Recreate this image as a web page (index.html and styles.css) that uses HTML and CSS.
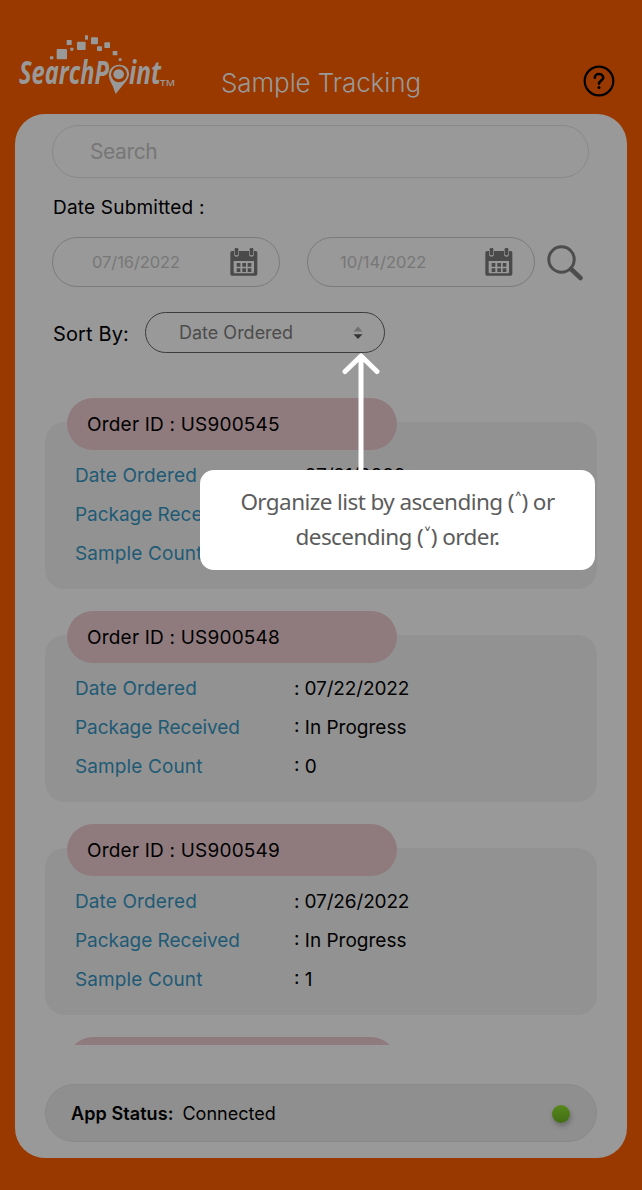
FILE: index.html
```html
<!DOCTYPE html>
<html lang="en">
<head>
<meta charset="utf-8">
<title>Sample Tracking</title>
<link rel="stylesheet" href="styles.css">
</head>
<body>
<svg class="defs" width="0" height="0">
  <symbol id="calendar" viewBox="0 0 84 84">
    <path fill="#4a4a4a" d="M6 9H12V17Q12 26 19.500 26T27 17V9H57V17Q57 26 64.500 26T72 17V9H78Q82 9 82 14V78Q82 83 77 83H6Q1 83 1 78V14Q1 9 6 9ZM11 39V73Q11 76 14 76H69Q72 76 72 73V39Z"/>
    <path fill="#4a4a4a" d="M20 45h11v11H20zM37 45h11v11H37zM53 45h11v11H53zM20 61h11v11H20zM37 61h11v11H37zM53 61h11v11H53z"/>
    <rect x="14" y="0" width="11" height="22" rx="4" fill="#4a4a4a"/>
    <rect x="59" y="0" width="11" height="22" rx="4" fill="#4a4a4a"/>
  </symbol>
</svg>
<div class="app">
  <header class="header">
    <svg class="logo" viewBox="0 20 214 94" width="214" height="94">
      <g fill="#999">
        <g transform="translate(0 20) scale(.33333)">
          <rect x="170" y="87" width="31" height="31" rx="3"/><rect x="150" y="109" width="10" height="9" rx="2"/>
          <rect x="200" y="60" width="15" height="15" rx="2"/><rect x="211" y="83" width="9" height="9" rx="2"/>
          <rect x="231" y="65" width="26" height="25" rx="3"/><rect x="255" y="46" width="9" height="13" rx="2"/>
          <rect x="273" y="52" width="21" height="21" rx="3"/><rect x="291" y="79" width="15" height="14" rx="2"/>
          <rect x="313" y="67" width="17" height="17" rx="2"/><rect x="338" y="93" width="14" height="13" rx="2"/>
          <rect x="356" y="115" width="9" height="8" rx="2"/>
          <path fill-rule="evenodd" d="M357 134C376 134 388 146 387 163C386 178 374 189 364 201Q356 211 347 222Q343 211 339 200C333 187 325 176 327 160C329 145 341 134 357 134ZM357 139A24 24 0 1 0 357 187A24 24 0 1 0 357 139Z"/>
          <ellipse cx="356" cy="163" rx="16" ry="15"/>
        </g>
        <text class="logo-word" x="19" y="83.500" textLength="90" lengthAdjust="spacingAndGlyphs">SearchP</text>
        <text class="logo-word" x="129" y="83.500" textLength="32" lengthAdjust="spacingAndGlyphs">int</text>
        <text class="logo-tm" x="160" y="86" textLength="15" lengthAdjust="spacingAndGlyphs">TM</text>
      </g>
    </svg>
    <h1 class="title">Sample Tracking</h1>
    <svg class="help" width="32" height="32" viewBox="0 0 32 32" fill="none" stroke="#000" stroke-width="2.200">
      <circle cx="16" cy="16" r="14.300"/>
      <path stroke-width="2.600" stroke-linecap="round" d="M11.800 12.700C11.800 7.800 20.200 7.800 20.200 12.700C20.200 15.500 16 15.500 16 18.800"/>
      <circle cx="16" cy="22.600" r="1.500" fill="#000" stroke="none"/>
    </svg>
  </header>
  <main class="panel">
    <div class="search">Search</div>
    <div class="label">Date Submitted :</div>
    <div class="dates">
      <div class="date"><span>07/16/2022</span><svg width="28" height="28"><use href="#calendar"/></svg></div>
      <div class="date date-to"><span>10/14/2022</span><svg width="28" height="28"><use href="#calendar"/></svg></div>
      <svg class="find" width="36" height="36" viewBox="0 0 36 36" fill="none" stroke="#4d4d4d">
        <circle cx="14.500" cy="14.500" r="12.700" stroke-width="3"/>
        <path d="M24 24L33.500 33" stroke-width="4.500" stroke-linecap="round"/>
      </svg>
    </div>
    <div class="sort">
      <span class="sort-label">Sort By:</span>
      <div class="select"><span>Date Ordered</span>
        <svg width="10" height="14" viewBox="0 0 10 14"><path d="M5 .5L9.500 5.500H.5z" fill="#707070"/><path d="M5 13L9.500 8.200H.5z" fill="#333"/></svg>
      </div>
    </div>
    <div class="orders">
      <section class="order">
        <div class="order-id">Order ID : US900545</div>
        <div class="card">
          <span class="key k1">Date Ordered</span><span class="val day">: 07/21/2022</span>
          <span class="key k2">Package Received</span><span class="val"></span>
          <span class="key k3">Sample Count</span><span class="val"></span>
        </div>
      </section>
      <section class="order">
        <div class="order-id">Order ID : US900548</div>
        <div class="card">
          <span class="key k1">Date Ordered</span><span class="val day">: 07/22/2022</span>
          <span class="key k2">Package Received</span><span class="val">: In Progress</span>
          <span class="key k3">Sample Count</span><span class="val">: 0</span>
        </div>
      </section>
      <section class="order">
        <div class="order-id">Order ID : US900549</div>
        <div class="card">
          <span class="key k1">Date Ordered</span><span class="val day">: 07/26/2022</span>
          <span class="key k2">Package Received</span><span class="val">: In Progress</span>
          <span class="key k3">Sample Count</span><span class="val">: 1</span>
        </div>
      </section>
      <section class="order"><div class="order-id"></div></section>
    </div>
    <footer class="status"><b>App Status:</b><span>Connected</span><i class="dot"></i></footer>
  </main>
  <div class="callout">
    <svg class="arrow" width="40" height="118" viewBox="0 0 40 118" fill="none" stroke="#fff" stroke-width="5" stroke-linecap="round" stroke-linejoin="round"><path d="M20 118V4M4 19.500L20 4L36 19.500"/></svg>
    <div class="tip"><div>Organize list by ascending (<span class="caret">˄</span>) or</div><div>descending (<span class="caret">˅</span>) order.</div></div>
  </div>
</div>
</body>
</html>
```
FILE: styles.css
```css
* { box-sizing: border-box; }
body { margin: 0; background: #993900; font-family: Inter, "Liberation Sans", sans-serif; color: #000; }
.defs { display: block; position: absolute; }
.app { position: relative; width: 642px; height: 1190px; padding: 0 15px 32px; overflow: hidden; background: #993900; }
.header { height: 114px; display: flex; align-items: flex-start; margin: 0 -15px; padding-right: 27px; }
.logo { flex: none; margin-top: 20px; }
.logo-word { font: italic 700 33px "Open Sans", sans-serif; }
.logo-tm { font: 600 8.500px "Open Sans", sans-serif; }
.title { margin: 67px 0 0 7px; font-size: 26px; line-height: 32px; font-weight: 350; letter-spacing: -.1px; color: #999; white-space: nowrap; }
.help { margin: 65px 0 0 auto; flex: none; }
.panel { height: 1044px; border-radius: 30px; background: #999; padding: 11px 30px 0; }
.search { height: 53px; width: 537px; margin-left: 7px; border: 1.500px solid #898989; border-radius: 27px; padding-left: 37px; font-size: 21px; line-height: 51px; letter-spacing: -.4px; color: #777; }
.label { margin: 18px 0 0 8px; font-size: 19px; line-height: 24px; letter-spacing: .2px; }
.dates { display: flex; margin: 17px 0 0 7px; height: 50px; }
.date { width: 228px; border: 1.500px solid #7b7b7b; border-radius: 26px; display: flex; align-items: center; justify-content: space-between; padding: 0 21px 0 39px; font-size: 16.500px; letter-spacing: -.08px; color: #777; }
.date-to { margin-left: 27px; padding-left: 32px; }
.find { margin: 8px 0 0 12px; }
.sort { display: flex; margin: 25px 0 0 8px; height: 41px; }
.sort-label { width: 92px; font-size: 20px; line-height: 44px; letter-spacing: .12px; }
.select { width: 240px; border: 1.500px solid #3c3c3c; border-radius: 21px; display: flex; align-items: center; justify-content: space-between; padding: 0 21px 0 33px; font-size: 18px; color: #4c4c4c; }
.orders { margin-top: 45px; height: 647px; overflow: hidden; }
.order { height: 213px; }
.order-id { position: relative; z-index: 1; width: 330px; height: 52px; margin-left: 22px; border-radius: 26px; background: #8f7b7d; padding-left: 20px; font-size: 19px; line-height: 53px; letter-spacing: .2px; }
.card { height: 167px; margin-top: -28px; border-radius: 20px; background: #929292; padding: 34px 0 0 30px; display: grid; grid-template-columns: 219px 1fr; grid-auto-rows: 39px; font-size: 19px; line-height: 39px; }
.key { color: #1f5a75; }
.k1 { letter-spacing: .12px; }
.k2 { letter-spacing: -.03px; }
.k3 { letter-spacing: .12px; }
.day { letter-spacing: -.14px; }
.status { margin-top: 39px; height: 58px; border: 1px solid #8a8a8a; border-radius: 29px; background: #8f8f8f; display: flex; align-items: center; gap: 9px; padding: 0 26px 0 25px; font-size: 18px; }
.status b { font-weight: 600; letter-spacing: .08px; }
.dot { width: 18px; height: 18px; margin: 2px 0 0 auto; border-radius: 50%; background: linear-gradient(#56891b, #426c14); box-shadow: 1px 3px 5px rgba(0,0,0,.25); }
.callout { position: absolute; z-index: 2; left: 200px; top: 352px; width: 395px; }
.arrow { display: block; margin-left: 141px; }
.tip { height: 100px; border-radius: 14px; background: #fff; padding-top: 14px; text-align: center; font: 22.500px/35px "Noto Sans", sans-serif; letter-spacing: -.58px; color: #5c5c5c; white-space: nowrap; }
.caret { font: 17px/0 "DejaVu Sans", sans-serif; vertical-align: 4px; letter-spacing: -1px; }
```
